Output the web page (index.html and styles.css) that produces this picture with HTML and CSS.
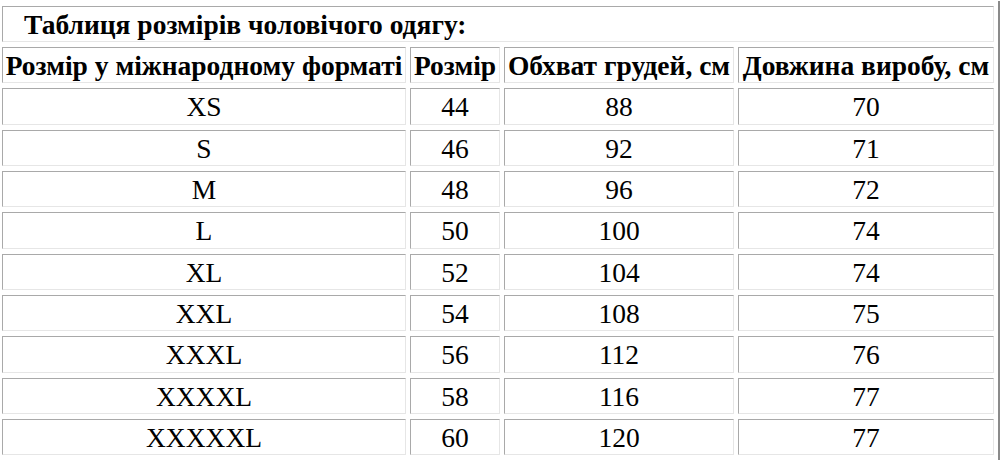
FILE: index.html
```html
<!DOCTYPE html>
<html lang="uk">
<head>
<meta charset="utf-8">
<title>Таблиця розмірів</title>
<link rel="stylesheet" href="styles.css">
</head>
<body>
<table class="sizes">
  <colgroup>
    <col class="c1"><col class="c2"><col class="c3"><col class="c4">
  </colgroup>
  <tr><td class="title" colspan="4">Таблиця розмірів чоловічого одягу:</td></tr>
  <tr class="head">
    <th>Розмір у міжнародному форматі</th>
    <th>Розмір</th>
    <th>Обхват грудей, см</th>
    <th>Довжина виробу, см</th>
  </tr>
  <tr><td>XS</td><td>44</td><td>88</td><td>70</td></tr>
  <tr><td>S</td><td>46</td><td>92</td><td>71</td></tr>
  <tr><td>M</td><td>48</td><td>96</td><td>72</td></tr>
  <tr><td>L</td><td>50</td><td>100</td><td>74</td></tr>
  <tr><td>XL</td><td>52</td><td>104</td><td>74</td></tr>
  <tr><td>XXL</td><td>54</td><td>108</td><td>75</td></tr>
  <tr><td>XXXL</td><td>56</td><td>112</td><td>76</td></tr>
  <tr><td>XXXXL</td><td>58</td><td>116</td><td>77</td></tr>
  <tr><td>XXXXXL</td><td>60</td><td>120</td><td>77</td></tr>
</table>
</body>
</html>
```
FILE: styles.css
```css
html, body {
  margin: 0;
  padding: 0;
  background: #ffffff;
  overflow: hidden;
}
body {
  font-family: "Liberation Serif", "Times New Roman", serif;
  color: #000;
}
.sizes {
  border-collapse: separate;
  border-spacing: 4px 5px;
  table-layout: fixed;
  width: 1000px;
  margin: 1px 0 0 -2px;
  border-right: 2px solid #8a8a8a;
  border-top: 0;
}
.c1 { width: 404px; }
.c2 { width: 90px; }
.c3 { width: 230px; }
.c4 { width: 256px; }
.sizes td, .sizes th {
  box-sizing: border-box;
  border: 1px solid;
  border-color: #a9a9a9 #e6e6e6 #e6e6e6 #a9a9a9;
  padding: 2px 0 0 0;
  text-align: center;
  vertical-align: middle;
  height: 36.33px;
  font-size: 27.5px;
  line-height: 30px;
  white-space: nowrap;
}
.sizes th {
  font-weight: bold;
  font-size: 27.5px;
}
.sizes .title {
  text-align: left;
  padding-left: 21px;
  font-weight: bold;
  font-size: 27.5px;
  height: 36px;
}
```
